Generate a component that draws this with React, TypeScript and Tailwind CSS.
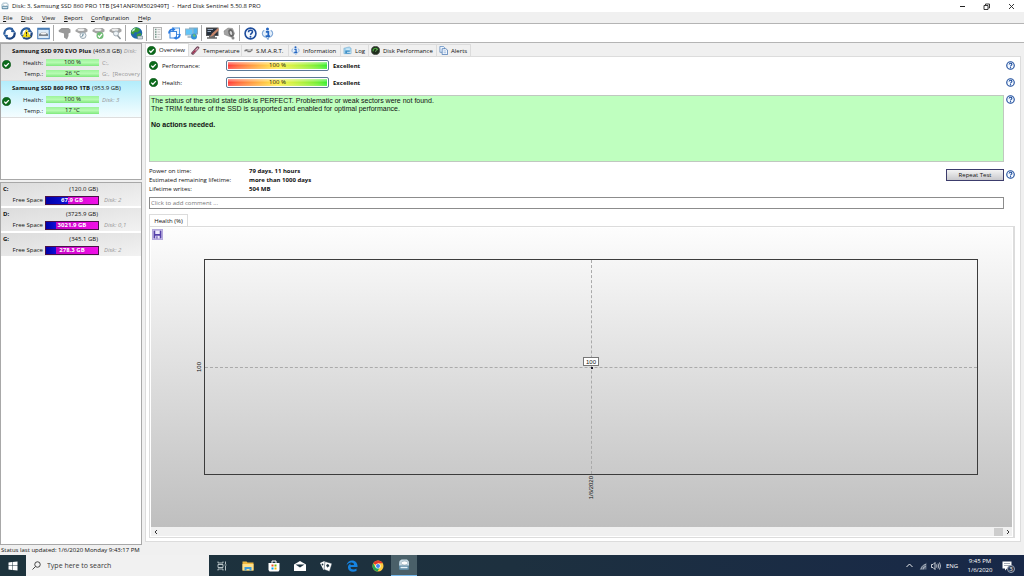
import type { ReactNode } from 'react';

interface IconProps {
  className?: string;
}

function CheckIcon({ className = 'size-[9px]' }: IconProps) {
  return (
    <svg viewBox="0 0 18 18" className={`${className} shrink-0`} aria-hidden="true">
      <circle cx="9" cy="9" r="8.5" fill="#0c6b1c" stroke="#064d10" />
      <path d="M4.5 9.2l3.2 3.3 6-6.3" fill="none" stroke="#fff" strokeWidth="2.6" />
    </svg>
  );
}

function HelpIcon({ className = 'size-[9px]' }: IconProps) {
  return (
    <svg viewBox="0 0 24 24" className={`${className} shrink-0`} aria-hidden="true">
      <circle cx="12" cy="12" r="10" fill="#f4f9ff" stroke="#1d4c9c" strokeWidth="3" />
      <path d="M8.3 9.5c0-5 7.6-4.6 7.4-.4-.2 2.6-3.6 2.5-3.7 5.4" fill="none" stroke="#1d4c9c" strokeWidth="2.8" />
      <circle cx="12" cy="18" r="1.7" fill="#1d4c9c" />
    </svg>
  );
}

function InfoIcon({ className = 'size-[10px]' }: IconProps) {
  return (
    <svg viewBox="0 0 24 24" className={`${className} shrink-0`} aria-hidden="true">
      <path d="M6 6C2 8 1 14 5 17c2 2 4 2 5 2l3 4 1-4c8-1 10-9 4-13" fill="#e3effb" stroke="#7fa6d6" strokeWidth="2" />
      <circle cx="12" cy="3.5" r="2.8" fill="#2465c0" />
      <path d="M9 9h4.5v7.5M8.5 17h8" fill="none" stroke="#2465c0" strokeWidth="3.2" />
    </svg>
  );
}

function RefreshIcon({ warning = false }: { warning?: boolean }) {
  return (
    <svg viewBox="0 0 26 26" className="size-[13px]" aria-hidden="true">
      <path d="M3 15A10 10 0 0 1 19 5" fill="none" stroke="#2d5f9f" strokeWidth="4.4" />
      <path d="M23 11A10 10 0 0 1 7 21" fill="none" stroke="#1d4480" strokeWidth="4.4" />
      <path d="M18 1l7 10-9-1zM8 25L1 15l9 1z" fill="#2d5f9f" />
      {warning && (
        <>
          <path d="M13 5l8 15H5z" fill="#ffe81a" stroke="#c2ac00" />
          <path d="M13 10v5M13 16.5v2" stroke="#222" strokeWidth="2.2" />
        </>
      )}
    </svg>
  );
}

function DriveWindowIcon() {
  return (
    <svg viewBox="0 0 26 26" className="size-[13px]" aria-hidden="true">
      <rect x="1.5" y="2.5" width="23" height="21" fill="#dcebf8" stroke="#3e74b0" strokeWidth="2" />
      <path d="M2 4h22" stroke="#3e74b0" strokeWidth="3" />
      <path d="M4 14l5-3h8l5 3v4H4z" fill="#7d848b" />
      <ellipse cx="13" cy="13" rx="6" ry="2" fill="#f3f3f3" />
    </svg>
  );
}

function DiskToolIcon({ kind }: { kind: 'plain' | 'clock' | 'check' | 'search' }) {
  return (
    <svg viewBox="0 0 26 26" className="size-[13px]" aria-hidden="true">
      {kind === 'plain' && <path d="M1 7l6-5h14l4 3v6l-4 2v5l-3 7-6-4v-8L2 10z" fill="#999" />}
      {kind !== 'plain' && (
        <>
          <path d="M1 6l6-4h14l4 3v4l-7 4H9L1 9z" fill="#a4a4a4" />
          <ellipse cx="12" cy="5.5" rx="7" ry="2.6" fill="#ececec" />
        </>
      )}
      {kind === 'clock' && (
        <>
          <circle cx="16" cy="17" r="6" fill="#f2f6f8" stroke="#9ba9b2" strokeWidth="2" />
          <path d="M16 13v4l-3 2" fill="none" stroke="#53788c" strokeWidth="2" />
        </>
      )}
      {kind === 'check' && (
        <>
          <circle cx="16" cy="17" r="7" fill="#6fbb74" />
          <path d="M12 17l3 3 5-6" fill="none" stroke="#fff" strokeWidth="2.4" />
        </>
      )}
      {kind === 'search' && (
        <>
          <circle cx="14" cy="13" r="5" fill="#eef3f6" stroke="#a5afb6" strokeWidth="2" />
          <path d="M17 17l6 7" stroke="#8b949a" strokeWidth="3" />
        </>
      )}
    </svg>
  );
}

function GlobeIcon() {
  return (
    <svg viewBox="0 0 26 26" className="size-[13px]" aria-hidden="true">
      <circle cx="13" cy="12" r="11.5" fill="#1f69ab" />
      <path d="M8 2c5-2 10 0 12 4l-5 5-5-1-4 5-4-3c0-4 2-8 6-10zM14 14l7-2 2 3-6 7-4-3z" fill="#3d9c3a" />
      <path d="M5 5l6-3-2 5-5 3z" fill="#c4ecdc" />
      <path d="M15 18h10v6H15z" fill="#cfd8de" stroke="#506b78" />
    </svg>
  );
}

function DocumentIcon() {
  return (
    <svg viewBox="0 0 26 26" className="size-[13px]" aria-hidden="true">
      <rect x="5" y="1" width="16" height="24" fill="#f4f4f4" stroke="#a5a5a5" strokeWidth="1.6" />
      <path d="M8 5h3M8 10h3M8 15h3M8 20h3" stroke="#6f9587" strokeWidth="3" />
      <path d="M13 5h6M13 10h5M13 15h6M13 20h4" stroke="#b9b9b9" strokeWidth="1.6" />
    </svg>
  );
}

function SendReportIcon() {
  return (
    <svg viewBox="0 0 26 26" className="size-[13px]" aria-hidden="true">
      <rect x="10" y="2" width="13" height="13" fill="#eaf4ff" stroke="#5b9be0" strokeWidth="2" />
      <rect x="4" y="9" width="13" height="13" fill="#f8fbff" stroke="#3c86dd" strokeWidth="2" />
      <path d="M2 13c0-6 4-9 9-8M24 14c-1 6-4 9-9 8" fill="none" stroke="#2a7ae0" strokeWidth="3.6" />
      <path d="M9 0l6 5-6 4zM17 18l-6 4 6 4z" fill="#2a7ae0" />
    </svg>
  );
}

function NetworkIcon() {
  return (
    <svg viewBox="0 0 26 26" className="size-[13px]" aria-hidden="true">
      <rect x="9" y="2" width="16" height="12" fill="#4eb4ef" stroke="#88a9bd" strokeWidth="2" />
      <rect x="1" y="4" width="15" height="12" fill="#62c5f8" stroke="#9ab5c6" strokeWidth="2" />
      <path d="M5 20h9" stroke="#9daebb" strokeWidth="3" />
      <circle cx="18" cy="19" r="6" fill="#3492d6" />
      <path d="M15 16l4-2 3 4-4 2z" fill="#67c072" />
    </svg>
  );
}

function ConfigureIcon() {
  return (
    <svg viewBox="0 0 26 26" className="size-[13px]" aria-hidden="true">
      <rect x="1" y="2" width="23" height="15" fill="#26303d" stroke="#575757" strokeWidth="2" />
      <path d="M2 22h20M6 19h12" stroke="#6a6a6a" strokeWidth="3" />
      <path d="M24 2L12 13l-4 7 7-3L26 6z" fill="#c68569" />
      <path d="M3 5h11M3 9h7" stroke="#98a8bc" strokeWidth="2" />
    </svg>
  );
}

function SpeakerIcon() {
  return (
    <svg viewBox="0 0 26 26" className="size-[13px]" aria-hidden="true">
      <path d="M2 8l8-6 9 1 4 10-4 8-6-2-10-4z" fill="#a4a4a4" stroke="#777" />
      <ellipse cx="16" cy="12" rx="5" ry="8" fill="#666" transform="rotate(-18 16 12)" />
      <ellipse cx="16" cy="12" rx="2.4" ry="4" fill="#d7d7d7" transform="rotate(-18 16 12)" />
      <circle cx="20" cy="22" r="3" fill="#888" />
    </svg>
  );
}

function AppIcon({ className = 'size-[8px]' }: IconProps) {
  return (
    <svg viewBox="0 0 24 24" className={`${className} shrink-0`} aria-hidden="true">
      <rect x="2" y="5" width="20" height="17" rx="3" fill="#5f8ba4" />
      <path d="M3 4l4-3h11l4 4v8H2z" fill="#c9dbe5" />
      <ellipse cx="13" cy="8" rx="7" ry="4" fill="#fff" stroke="#6f8f9f" />
      <path d="M5 17h14" stroke="#e5f3fa" strokeWidth="3" />
    </svg>
  );
}

function ThermometerIcon() {
  return (
    <svg viewBox="0 0 20 20" className="size-[9px] shrink-0" aria-hidden="true">
      <path d="M4 16L15 4" stroke="#6b4256" strokeWidth="7" strokeLinecap="round" />
      <path d="M5 15L15 5" stroke="#dfb0bf" strokeWidth="3" strokeLinecap="round" />
      <path d="M4 16l6-6" stroke="#a12648" strokeWidth="2.4" />
    </svg>
  );
}

function SmartIcon() {
  return (
    <svg viewBox="0 0 20 20" className="size-[9px] shrink-0" aria-hidden="true">
      <path d="M1 9l4-2h10l4-1v4l-5 4H8l-1-3-6 1z" fill="#777" />
      <ellipse cx="12" cy="9" rx="5" ry="1.8" fill="#e6e6e6" />
    </svg>
  );
}

function LogIcon() {
  return (
    <svg viewBox="0 0 20 20" className="size-[9px] shrink-0" aria-hidden="true">
      <path d="M2 5l12-3 4 3v12H2z" fill="#a6d5ef" stroke="#5c9bc4" />
      <path d="M5 10h10v7H5z" fill="#3f8fc6" />
      <path d="M7 7h8M9 14h8" stroke="#e9f7ff" strokeWidth="2" />
    </svg>
  );
}

function GaugeIcon() {
  return (
    <svg viewBox="0 0 20 20" className="size-[9px] shrink-0" aria-hidden="true">
      <circle cx="10" cy="10" r="9" fill="#1e2d1b" stroke="#4a4e48" strokeWidth="2" />
      <path d="M5 12a5 5 0 0 1 10-3" fill="none" stroke="#4fae43" strokeWidth="2.4" />
      <path d="M10 13l3-6" stroke="#8fd07f" strokeWidth="1.6" />
    </svg>
  );
}

function AlertsIcon() {
  return (
    <svg viewBox="0 0 20 20" className="size-[9px] shrink-0" aria-hidden="true">
      <path d="M2 1h8l2 2v11H2z" fill="#edf5ff" stroke="#5482b8" strokeWidth="1.6" />
      <path d="M7 6h8l4 3v10H7z" fill="#f8fbff" stroke="#3a6cab" strokeWidth="1.6" />
      <path d="M10 11h6M10 15h6" stroke="#7fa4d2" strokeWidth="1.6" />
    </svg>
  );
}

const TOOLBAR: { label: string; icon: ReactNode }[][] = [
  [
    { label: 'Refresh', icon: <RefreshIcon /> },
    { label: 'Refresh problems', icon: <RefreshIcon warning /> },
    { label: 'Disk window', icon: <DriveWindowIcon /> },
  ],
  [
    { label: 'Disk test', icon: <DiskToolIcon kind="plain" /> },
    { label: 'Scheduled test', icon: <DiskToolIcon kind="clock" /> },
    { label: 'Verify disk', icon: <DiskToolIcon kind="check" /> },
    { label: 'Inspect disk', icon: <DiskToolIcon kind="search" /> },
  ],
  [{ label: 'Website', icon: <GlobeIcon /> }],
  [
    { label: 'Text report', icon: <DocumentIcon /> },
    { label: 'Send report', icon: <SendReportIcon /> },
    { label: 'Network', icon: <NetworkIcon /> },
  ],
  [
    { label: 'Configure', icon: <ConfigureIcon /> },
    { label: 'Sounds', icon: <SpeakerIcon /> },
  ],
  [
    { label: 'Help', icon: <HelpIcon className="size-[13px]" /> },
    { label: 'About', icon: <InfoIcon className="size-[13px]" /> },
  ],
];

const MENU = [
  { label: 'File', width: 'w-[18px]' },
  { label: 'Disk', width: 'w-[21px]' },
  { label: 'View', width: 'w-[22px]' },
  { label: 'Report', width: 'w-[27px]' },
  { label: 'Configuration', width: 'w-[47px]' },
  { label: 'Help', width: 'w-[20px]' },
];

const TABS = [
  { label: 'Temperature', icon: <ThermometerIcon />, width: 'w-[53px]' },
  { label: 'S.M.A.R.T.', icon: <SmartIcon />, width: 'w-[47px]' },
  { label: 'Information', icon: <InfoIcon className="size-[9px]" />, width: 'w-[52px]' },
  { label: 'Log', icon: <LogIcon />, width: 'w-[28px]' },
  { label: 'Disk Performance', icon: <GaugeIcon />, width: 'w-[68px]' },
  { label: 'Alerts', icon: <AlertsIcon />, width: 'w-[34px]' },
];

const DISKS = [
  {
    name: 'Samsung SSD 970 EVO Plus',
    size: '(465.8 GB)',
    extra: 'Disk:',
    health: '100 %',
    temp: '26 °C',
    notes: ['C:,', 'G:,  [Recovery'],
    italic: false,
    selected: false,
  },
  {
    name: 'Samsung SSD 860 PRO 1TB',
    size: '(953.9 GB)',
    extra: '',
    health: '100 %',
    temp: '17 °C',
    notes: ['Disk: 3', ''],
    italic: true,
    selected: true,
  },
];

const DRIVES = [
  { letter: 'C:', size: '(120.0 GB)', free: '67.9 GB', disk: 'Disk: 2', used: 43 },
  { letter: 'D:', size: '(3725.9 GB)', free: '3021.9 GB', disk: 'Disk: 0,1', used: 19 },
  { letter: 'G:', size: '(345.1 GB)', free: '278.3 GB', disk: 'Disk: 2', used: 19 },
];

const STATS = [
  { label: 'Power on time:', value: '79 days, 11 hours' },
  { label: 'Estimated remaining lifetime:', value: 'more than 1000 days' },
  { label: 'Lifetime writes:', value: '504 MB' },
];

function TitleBar() {
  return (
    <header className="flex h-3 items-center bg-white pl-px">
      <AppIcon />
      <h1 className="ml-[3px] flex-1 whitespace-pre">
        {'Disk: 3, Samsung SSD 860 PRO 1TB [S41ANF0M502949T]  -  Hard Disk Sentinel 5.50.8 PRO'}
      </h1>
      <button aria-label="Minimize" className="flex w-6 justify-center">
        <svg viewBox="0 0 7 7" className="size-[7px]"><path d="M1 3.5h5" stroke="#222" /></svg>
      </button>
      <button aria-label="Restore" className="flex w-6 justify-center">
        <svg viewBox="0 0 7 7" className="size-[7px]">
          <path d="M1 2.5h4v4H1zM2.5 2V1h4v4H5.5" fill="none" stroke="#222" strokeWidth=".9" />
        </svg>
      </button>
      <button aria-label="Close" className="flex w-[26px] justify-center">
        <svg viewBox="0 0 7 7" className="size-[7px]"><path d="M1 1l5 5M6 1L1 6" stroke="#222" strokeWidth=".9" /></svg>
      </button>
    </header>
  );
}

function DiskBar({ value }: { value: string }) {
  return (
    <div className="ml-[3px] h-[7px] w-[53px] shrink-0 bg-linear-to-b from-[#9cf49a] via-[#b6fbb2] to-[#7ee87c] text-center leading-[7px]">
      {value}
    </div>
  );
}

function DiskCard({ disk }: { disk: (typeof DISKS)[number] }) {
  const background = disk.selected
    ? 'bg-linear-to-b from-[#b2edfb] to-[#f4fdff]'
    : 'bg-linear-to-br from-[#dcdcdc] to-[#f2f2f2]';
  const noteStyle = disk.italic ? 'italic text-[#999]' : 'text-[#999]';

  return (
    <li className={`h-[37px] border-b border-[#dedede] pt-px whitespace-pre ${background}`}>
      <p className="flex h-3 items-center gap-[2px] pl-[11px]">
        <b>{disk.name}</b>
        <span>{disk.size}</span>
        <i className="text-[#999]">{disk.extra}</i>
      </p>
      <div className="flex items-start">
        <span className="pt-[3px] pl-px"><CheckIcon /></span>
        <div className="min-w-0 flex-1">
          <div className="flex h-[11px] items-center">
            <span className="w-8 shrink-0 text-right">Health:</span>
            <DiskBar value={disk.health} />
            <span className={`ml-[3px] ${noteStyle}`}>{disk.notes[0]}</span>
          </div>
          <div className="flex h-[11px] items-center">
            <span className="w-8 shrink-0 text-right">Temp.:</span>
            <DiskBar value={disk.temp} />
            <span className={`ml-[3px] ${noteStyle}`}>{disk.notes[1]}</span>
          </div>
        </div>
      </div>
    </li>
  );
}

function DriveCard({ drive }: { drive: (typeof DRIVES)[number] }) {
  return (
    <li className="h-[25px] border-b-2 border-white bg-linear-to-br from-[#dcdcdc] to-[#f2f2f2] px-[2px]">
      <p className="flex h-[11px] items-center">
        <b className="w-8">{drive.letter}</b>
        <span className="w-[63px] text-right">{drive.size}</span>
      </p>
      <div className="flex h-3 items-center">
        <span className="w-[40px] text-right">Free Space</span>
        <div className="relative ml-[2px] h-[9px] w-[54px] border border-[#4a104a] bg-linear-to-r from-[#b800b8] to-[#f010e8]">
          <div className="h-full bg-linear-to-r from-[#0000a8] to-[#1010d8]" style={{ width: `${drive.used}%` }} />
          <b className="absolute inset-0 text-center leading-[7px] text-white">{drive.free}</b>
        </div>
        <i className="ml-[5px] text-[#999]">{drive.disk}</i>
      </div>
    </li>
  );
}

function Sidebar() {
  return (
    <aside className="flex w-[142px] shrink-0 flex-col gap-[2px]">
      <ul className="h-[137px] border border-[#a8a8a8] bg-white">
        {DISKS.map((disk) => (
          <DiskCard key={disk.name} disk={disk} />
        ))}
      </ul>
      <ul className="flex-1 border border-[#a8a8a8] bg-white">
        {DRIVES.map((drive) => (
          <DriveCard key={drive.letter} drive={drive} />
        ))}
      </ul>
    </aside>
  );
}

function ScoreRow({ label }: { label: string }) {
  return (
    <div className="flex h-[17px] items-center">
      <CheckIcon />
      <span className="ml-1 w-16">{label}</span>
      <div className="h-[11px] w-[103px] rounded-[2px] border border-[#5c7896] bg-white p-px">
        <div className="h-full bg-linear-to-r from-[#ff3a3a] via-[#fff04a] to-[#30ee30]">
          <div className="h-full bg-linear-to-b from-white/50 via-white/0 to-white/20 text-center leading-[7px]">
            100 %
          </div>
        </div>
      </div>
      <b className="ml-1">Excellent</b>
      <button aria-label={`${label} help`} className="ml-auto"><HelpIcon /></button>
    </div>
  );
}

function HealthChart() {
  return (
    <section className="flex min-h-0 flex-1 flex-col">
      <div className="flex h-3">
        <button className="flex w-[39px] items-center justify-center border border-b-0 border-[#dcdcdc] bg-white">
          Health (%)
        </button>
      </div>
      <div className="flex min-h-0 flex-1 flex-col border border-r-2 border-[#dcdcdc] p-px">
        <div className="relative flex flex-1 flex-col bg-linear-to-b from-[#fdfdfd] to-[#bfbfbf] pt-[31px] pr-[34px] pb-[52px] pl-[53px]">
          <button
            aria-label="Save chart"
            className="absolute top-px left-px flex size-[11px] items-center justify-center border border-[#b4a8dc] bg-[#ddd6f4]"
          >
            <svg viewBox="0 0 16 16" className="size-[9px]">
              <path d="M1 1h14v14H1z" fill="#5540a8" />
              <path d="M4 1h8v6H4zM4 10h8v5H4z" fill="#eeeafc" />
              <path d="M6 11h2v4H6z" fill="#5540a8" />
            </svg>
          </button>
          <div className="relative flex-1 border border-[#3c3c3c]">
            <div className="absolute inset-x-0 top-1/2 border-t border-dashed border-[#aaa]" />
            <div className="absolute inset-y-0 left-1/2 border-l border-dashed border-[#aaa]" />
            <div className="absolute top-1/2 left-1/2 size-[2px] bg-[#181828]" />
            <div className="absolute bottom-1/2 left-1/2 mb-px flex h-[9px] w-4 -translate-x-1/2 items-center justify-center border border-[#777] bg-white font-['Liberation_Sans',sans-serif]">
              100
            </div>
            <span className="absolute top-1/2 right-full mr-[2px] -translate-y-1/2 rotate-180 font-['Liberation_Sans',sans-serif] [writing-mode:vertical-rl]">
              100
            </span>
            <span className="absolute top-full left-1/2 mt-[2px] -translate-x-1/2 rotate-180 font-['Liberation_Sans',sans-serif] [writing-mode:vertical-rl]">
              1/6/2020
            </span>
          </div>
        </div>
        <div className="flex h-[9px] items-center bg-[#f0f0f0]">
          <button aria-label="Scroll left" className="flex w-[9px] justify-center">
            <svg viewBox="0 0 6 6" className="size-[6px]"><path d="M4 1L2 3l2 2" fill="none" stroke="#333" /></svg>
          </button>
          <span className="ml-auto h-[8px] w-[9px] bg-[#cdcdcd]" />
          <button aria-label="Scroll right" className="flex w-[9px] justify-center">
            <svg viewBox="0 0 6 6" className="size-[6px]"><path d="M2 1l2 2-2 2" fill="none" stroke="#333" /></svg>
          </button>
        </div>
      </div>
    </section>
  );
}

function Overview() {
  return (
    <main className="flex min-h-0 flex-1 flex-col border border-[#dcdcdc] bg-white pr-[5px] pb-[3px] pl-[3px]">
      <ScoreRow label="Performance:" />
      <ScoreRow label="Health:" />
      <div className="mt-1 flex items-start gap-[2px]">
        <div className="h-[67px] flex-1 border border-[#c0c8c0] bg-[#bfffbf] px-px pt-px font-['Liberation_Sans',sans-serif] text-[7px] leading-[8px]">
          <p>The status of the solid state disk is PERFECT. Problematic or weak sectors were not found.</p>
          <p>The TRIM feature of the SSD is supported and enabled for optimal performance.</p>
          <p className="mt-2 font-bold">No actions needed.</p>
        </div>
        <button aria-label="Status help"><HelpIcon /></button>
      </div>
      <div className="mt-[5px] flex items-center">
        <dl className="flex-1 leading-[9px]">
          {STATS.map((stat) => (
            <div key={stat.label} className="flex">
              <dt className="w-[100px]">{stat.label}</dt>
              <dd className="font-bold">{stat.value}</dd>
            </div>
          ))}
        </dl>
        <div className="mb-3 flex items-center gap-[2px]">
          <button className="h-3 w-[58px] border border-[#3c3c6c] bg-linear-to-b from-[#f4f4f4] to-[#c8c8cc]">
            Repeat Test
          </button>
          <button aria-label="Repeat test help"><HelpIcon /></button>
        </div>
      </div>
      <div className="mt-[3px] flex pr-[11px]">
        <input
          aria-label="Comment"
          placeholder="Click to add comment ..."
          className="h-3 min-w-0 flex-1 border border-[#8c8c8c] bg-white px-px placeholder:text-[#777]"
        />
      </div>
      <div className="mt-[5px] flex min-h-0 flex-1 flex-col">
        <HealthChart />
      </div>
    </main>
  );
}

const TASKS: { label: string; icon: ReactNode }[] = [
  {
    label: 'Task view',
    icon: <path d="M4 3v3h10V3M4 21v-3h10v3M4 9h10v6H4zM19 3v5M19 12v9M17 10h4" fill="none" stroke="#dce4e6" strokeWidth="1.6" />,
  },
  {
    label: 'File Explorer',
    icon: (
      <>
        <path d="M1 3h8l2 2h12v16H1z" fill="#efb73e" />
        <path d="M1 8h22v13H1z" fill="#ffe08a" />
        <path d="M5 14h14v7h-4v-3H9v3H5z" fill="#3f9bd8" />
      </>
    ),
  },
  {
    label: 'Store',
    icon: (
      <>
        <path d="M8 7V2h8v5" fill="none" stroke="#fff" strokeWidth="2" />
        <path d="M1 6h22v14l-2 3H3l-2-3z" fill="#fff" />
        <path d="M7 9h4v4H7z" fill="#f25022" />
        <path d="M13 9h4v4h-4z" fill="#7fba00" />
        <path d="M7 15h4v4H7z" fill="#00a4ef" />
        <path d="M13 15h4v4h-4z" fill="#ffb900" />
      </>
    ),
  },
  {
    label: 'Mail',
    icon: (
      <>
        <path d="M0 9l12-7 12 7v13H0z" fill="#fff" />
        <path d="M3 9h18l-9 6z" fill="#1d3340" />
      </>
    ),
  },
  {
    label: 'Solitaire',
    icon: (
      <>
        <path d="M0 6l9-4 4 14-6 4z" fill="#fff" />
        <path d="M10 3l14 4-5 16-11-4z" fill="#fff" stroke="#1d3340" />
        <path d="M16 8c4 3 3 7 0 5l-1 3-1-3c-3 0-2-4 2-5z" fill="#1d3340" />
        <circle cx="5" cy="9" r="1.8" fill="#1d3340" />
      </>
    ),
  },
  {
    label: 'Edge',
    icon: (
      <path
        d="M1 11C3-3 22-2 23 11v3H9c0 6 8 6 12 3v5C12 26 3 22 4 14c0-4 3-6 6-7-2 2-1 3-1 3h7c0-7-11-6-15 1z"
        fill="#1683e0"
      />
    ),
  },
  {
    label: 'Chrome',
    icon: (
      <>
        <circle cx="12" cy="12" r="11" fill="#ffcd40" />
        <path d="M12 12L2.5 6.5A11 11 0 0 1 21.5 6.5H12z" fill="#e33b2e" />
        <path d="M12 12L7 15 2.5 6.5A11 11 0 0 0 11 23l5-9z" fill="#23a455" />
        <circle cx="12" cy="12" r="5.2" fill="#fff" />
        <circle cx="12" cy="12" r="4" fill="#4284f3" />
      </>
    ),
  },
];

function Taskbar() {
  return (
    <footer className="flex h-[21px] shrink-0 items-stretch bg-linear-to-r from-[#1d333c] via-[#1d303f] to-[#182848] text-white">
      <button aria-label="Start" className="flex w-[26px] items-center justify-center">
        <svg viewBox="0 0 20 20" className="size-[10px]">
          <path d="M1 3l7-1v7H1zM9 2l10-1v8H9zM1 10h7v8l-7-1zM9 10h10v9L9 18z" fill="#fff" />
        </svg>
      </button>
      <label className="flex w-[183px] items-center gap-[6px] bg-[#f1f1f1] pl-[6px] text-[#3a3a3a]">
        <svg viewBox="0 0 18 18" className="size-[9px]">
          <circle cx="11" cy="7" r="5.5" fill="none" stroke="#333" strokeWidth="1.8" />
          <path d="M7 11l-6 6" stroke="#333" strokeWidth="1.8" />
        </svg>
        <input
          aria-label="Search"
          placeholder="Type here to search"
          className="min-w-0 flex-1 text-[7px] placeholder:text-[#3a3a3a]"
        />
      </label>
      {TASKS.map((task) => (
        <button key={task.label} aria-label={task.label} className="flex w-[26px] items-center justify-center">
          <svg viewBox="0 0 24 24" className="size-3">{task.icon}</svg>
        </button>
      ))}
      <button
        aria-label="Hard Disk Sentinel"
        className="flex w-[26px] items-center justify-center border-b border-[#76b9ed] bg-[#4a6069]"
      >
        <AppIcon className="size-3" />
      </button>
      <div className="ml-auto flex items-center">
        <svg viewBox="0 0 14 14" className="size-[7px]" aria-hidden="true">
          <path d="M1 10l6-6 6 6" fill="none" stroke="#fff" strokeWidth="1.8" />
        </svg>
        <svg viewBox="0 0 16 16" className="ml-[6px] size-[8px]" aria-hidden="true">
          <path d="M1 15L15 1v14z" fill="#5d6b80" />
          <path d="M4 15a10 10 0 0 1 10-10M8 15a6 6 0 0 1 6-6" fill="none" stroke="#dfe4ea" strokeWidth="1.3" />
        </svg>
        <svg viewBox="0 0 20 16" className="ml-1 h-[8px] w-[10px]" aria-hidden="true">
          <path d="M1 5h3l4-4v14l-4-4H1z" fill="none" stroke="#fff" strokeWidth="1.5" />
          <path d="M11 5q2 3 0 6M14 3q3 5 0 10M17 1q4 7 0 14" fill="none" stroke="#fff" strokeWidth="1.4" />
        </svg>
        <span className="ml-[5px] w-[15px]">ENG</span>
        <p className="ml-[5px] w-[28px] text-center leading-[9px]">
          9:45 PM
          <br />
          1/6/2020
        </p>
        <span className="relative ml-2 w-[22px]">
          <svg viewBox="0 0 20 20" className="size-[10px]" aria-hidden="true">
            <path d="M1 1h18v14H10l-4 4v-4H1z" fill="#fff" />
            <path d="M4 5h12M4 9h12" stroke="#7c8797" strokeWidth="1.4" />
          </svg>
          <span className="absolute top-[4px] left-[5px] size-[8px] rounded-full border border-[#9aa5b5] bg-[#27344e] text-center leading-[6px]">
            3
          </span>
        </span>
      </div>
    </footer>
  );
}

export default function App() {
  return (
    <div className="flex h-screen flex-col overflow-hidden bg-[#f0f0f0] font-['Open_Sans','Noto_Sans',sans-serif] text-[6px] leading-[8px] text-[#111]">
      <TitleBar />
      <nav className="flex h-[11px] items-center pl-[3px]">
        {MENU.map((item) => (
          <button key={item.label} className={`${item.width} text-left`}>
            <u>{item.label[0]}</u>
            {item.label.slice(1)}
          </button>
        ))}
      </nav>
      <div className="flex h-5 items-center border-y border-[#b4b4b4] bg-white pl-px">
        {TOOLBAR.map((group, index) => (
          <div key={group[0].label} className="flex items-center">
            {index > 0 && <span className="mr-[2px] ml-px h-4 w-px bg-[#a8a8a8]" />}
            {group.map((tool) => (
              <button key={tool.label} aria-label={tool.label} className="flex w-[17px] justify-center">
                {tool.icon}
              </button>
            ))}
          </div>
        ))}
      </div>
      <div className="flex min-h-0 flex-1 gap-[3px]">
        <Sidebar />
        <div className="flex min-w-0 flex-1 flex-col pr-[3px] pb-[3px]">
          <div className="flex h-[13px] items-end">
            <button className="flex h-[13px] w-[44px] items-center gap-[3px] border-x border-t border-[#dcdcdc] bg-white pl-px">
              <CheckIcon />
              Overview
            </button>
            {TABS.map((tab) => (
              <button
                key={tab.label}
                className={`${tab.width} flex h-3 items-center gap-[3px] border-t border-r border-[#dcdcdc] pl-[2px] whitespace-nowrap`}
              >
                {tab.icon}
                {tab.label}
              </button>
            ))}
          </div>
          <Overview />
        </div>
      </div>
      <div className="flex h-[10px] items-center pl-px">Status last updated: 1/6/2020 Monday 9:43:17 PM</div>
      <Taskbar />
    </div>
  );
}
